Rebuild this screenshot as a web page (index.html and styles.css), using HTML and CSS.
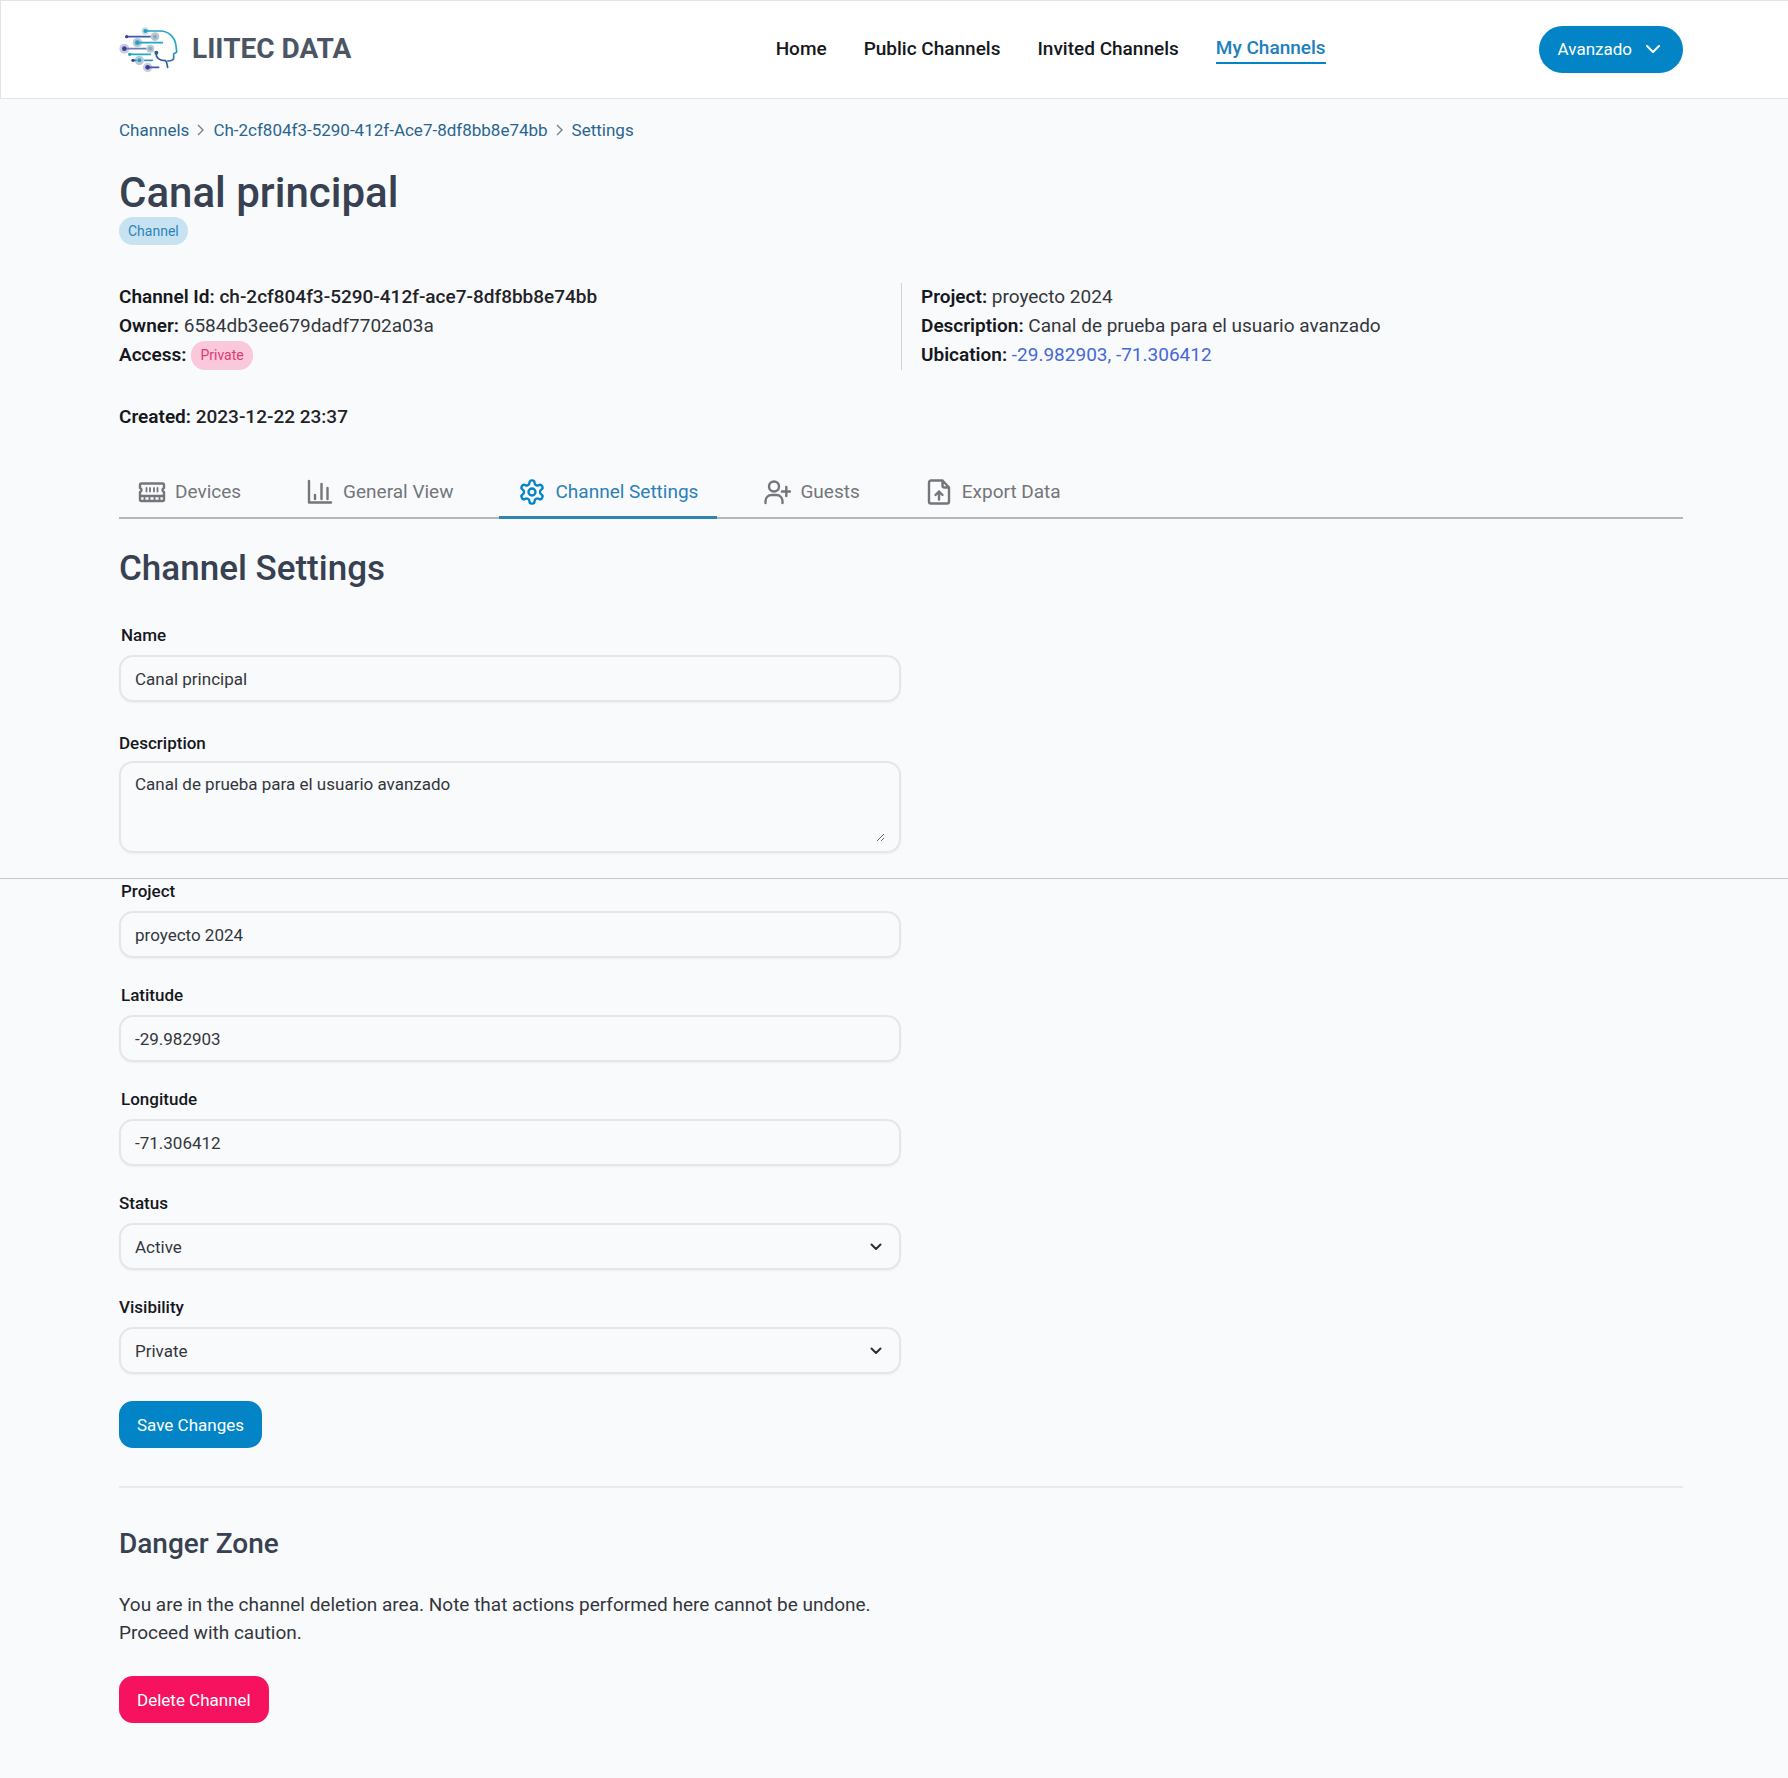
FILE: index.html
```html
<!DOCTYPE html>
<html lang="en">
<head>
<meta charset="utf-8">
<meta name="viewport" content="width=device-width, initial-scale=1">
<title>LIITEC DATA - Channel Settings</title>
<link rel="stylesheet" href="styles.css">
</head>
<body>
<header class="topbar">
  <a class="brand" href="#">
    <svg class="brand-mark" viewBox="57 78 180 141" fill="none" stroke-linecap="round" aria-hidden="true">
      <defs>
        <linearGradient id="head" gradientUnits="userSpaceOnUse" x1="165" y1="90" x2="200" y2="205">
          <stop offset="0" stop-color="#2a9fc4"/><stop offset=".55" stop-color="#1fb0c8"/><stop offset="1" stop-color="#3f4a9c"/>
        </linearGradient>
      </defs>
      <g fill="#b9c9d6">
        <circle cx="136" cy="93" r="11" fill="#bfe0e4"/><circle cx="165" cy="110" r="13"/><circle cx="112" cy="128" r="14"/>
        <circle cx="73" cy="146" r="15" fill="#c9cce0"/><circle cx="151" cy="146" r="12"/><circle cx="118" cy="181" r="14"/>
        <circle cx="143" cy="202" r="14" fill="#c9cce0"/>
      </g>
      <g stroke-width="5">
        <path d="M136 93h44c28 0 45 20 48 44l2 19c0 3-9 3-9 6v12c0 7-7 9-18 9" stroke="url(#head)"/>
        <path d="M168 158c0 16 12 24 29 24 5 6 4 13 6 20" stroke="#315e9f"/>
        <path d="M80 110h70" stroke="#4356a4"/><path d="M112 128h75" stroke="#1fa6c2"/>
        <path d="M73 146h64" stroke="#6d7db5"/><path d="M89 163h62" stroke="#24a6c4"/>
        <path d="M99 181h9M134 181h23" stroke="#3f8fb4"/><path d="M143 202h33" stroke="#3f57a4"/>
      </g>
      <g fill="#2a9fbd">
        <circle cx="136" cy="93" r="6"/><circle cx="112" cy="128" r="7"/><circle cx="89" cy="163" r="5"/>
        <circle cx="118" cy="181" r="6"/><circle cx="169" cy="158" r="6" fill="#285f91"/>
        <circle cx="165" cy="110" r="6" fill="#8ba9b8"/><circle cx="151" cy="146" r="6" fill="#8ba9b8"/>
        <circle cx="73" cy="146" r="7" fill="#3b3f92"/><circle cx="143" cy="202" r="7" fill="#3b3f92"/>
        <circle cx="80" cy="110" r="5" fill="#3b3f92"/><circle cx="99" cy="181" r="5" fill="#3b3f92"/>
      </g>
    </svg>
    <span class="brand-name">LIITEC DATA</span>
  </a>
  <nav class="nav" aria-label="Main">
    <a href="#">Home</a>
    <a href="#">Public Channels</a>
    <a href="#">Invited Channels</a>
    <a class="is-active" href="#" aria-current="page">My Channels</a>
  </nav>
  <button class="user-menu" type="button">Avanzado
    <svg width="16" height="16" viewBox="0 0 16 16" fill="none" stroke="currentColor" stroke-width="2" stroke-linecap="round" stroke-linejoin="round" aria-hidden="true"><path d="M2 5l6 6 6-6"/></svg>
  </button>
</header>

<main class="page">
  <nav class="crumbs" aria-label="Breadcrumb">
    <a href="#">Channels</a>
    <svg width="8" height="12" viewBox="0 0 8 12" aria-hidden="true"><path d="M1 1l5 5-5 5"/></svg>
    <a href="#">Ch-2cf804f3-5290-412f-Ace7-8df8bb8e74bb</a>
    <svg width="8" height="12" viewBox="0 0 8 12" aria-hidden="true"><path d="M1 1l5 5-5 5"/></svg>
    <a href="#">Settings</a>
  </nav>

  <h1 class="title">Canal principal</h1>
  <span class="badge badge-info">Channel</span>

  <section class="info">
    <div class="info-col">
      <p class="strong"><b>Channel Id:</b> ch-2cf804f3-5290-412f-ace7-8df8bb8e74bb</p>
      <p><b>Owner:</b> 6584db3ee679dadf7702a03a</p>
      <p class="access"><b>Access:</b> <span class="badge badge-danger">Private</span></p>
    </div>
    <div class="info-col info-side">
      <p><b>Project:</b> proyecto 2024</p>
      <p><b>Description:</b> Canal de prueba para el usuario avanzado</p>
      <p><b>Ubication:</b> <a class="map-link" href="#">-29.982903, -71.306412</a></p>
    </div>
  </section>
  <p class="created strong"><b>Created:</b> 2023-12-22 23:37</p>

  <nav class="tabs" aria-label="Channel sections">
    <a class="tab" href="#">
      <svg class="tab-icon" viewBox="0 0 28 28" aria-hidden="true"><path d="M3.5 5.5h21A1.5 1.5 0 0 1 26 7v3c-2 .5-2 3.5 0 4v7.5a1.5 1.5 0 0 1-1.5 1.5h-21A1.5 1.5 0 0 1 2 21.5V14c2-.5 2-3.5 0-4V7a1.5 1.5 0 0 1 1.5-1.5zM2 18h24"/><path class="thin" d="M8.5 10v3.5M12 10v3.5M16 10v3.5M19.5 10v3.5M6.5 19v4M11.500 19v4M16.500 19v4M21.500 19v4"/></svg>
      Devices</a>
    <a class="tab" href="#">
      <svg class="tab-icon" viewBox="0 0 28 28" aria-hidden="true"><path d="M3 3v21.500h22M9 17v4M15.500 6v15M21.500 10v11"/></svg>
      General View</a>
    <a class="tab is-active" href="#" aria-current="page">
      <svg class="tab-icon" viewBox="0 0 24 24" aria-hidden="true"><path d="M12.22 2h-.44a2 2 0 0 0-2 2v.18a2 2 0 0 1-1 1.73l-.43.25a2 2 0 0 1-2 0l-.15-.08a2 2 0 0 0-2.73.73l-.22.38a2 2 0 0 0 .73 2.73l.15.1a2 2 0 0 1 1 1.72v.51a2 2 0 0 1-1 1.74l-.15.09a2 2 0 0 0-.73 2.73l.22.38a2 2 0 0 0 2.73.73l.15-.08a2 2 0 0 1 2 0l.43.25a2 2 0 0 1 1 1.73V20a2 2 0 0 0 2 2h.44a2 2 0 0 0 2-2v-.18a2 2 0 0 1 1-1.73l.43-.25a2 2 0 0 1 2 0l.15.08a2 2 0 0 0 2.73-.73l.22-.39a2 2 0 0 0-.73-2.73l-.15-.08a2 2 0 0 1-1-1.74v-.5a2 2 0 0 1 1-1.74l.15-.09a2 2 0 0 0 .73-2.73l-.22-.38a2 2 0 0 0-2.73-.73l-.15.08a2 2 0 0 1-2 0l-.43-.25a2 2 0 0 1-1-1.73V4a2 2 0 0 0-2-2z"/><circle cx="12" cy="12" r="3"/></svg>
      Channel Settings</a>
    <a class="tab" href="#">
      <svg class="tab-icon" viewBox="0 0 28 28" aria-hidden="true"><circle cx="11" cy="8.500" r="5"/><path d="M2.500 25v-2a6 6 0 0 1 6-6h5a6 6 0 0 1 6 6v2M23.300 9v9M19 13.500h8"/></svg>
      Guests</a>
    <a class="tab" href="#">
      <svg class="tab-icon" viewBox="0 0 28 28" aria-hidden="true"><path d="M17.500 2.500H6a2 2 0 0 0-2 2v19a2 2 0 0 0 2 2h16a2 2 0 0 0 2-2v-14zM17.500 2.500V7.500a2 2 0 0 0 2 2H24M14 21.500v-8M10.500 17l3.500-3.500L17.500 17"/></svg>
      Export Data</a>
  </nav>

  <h2 class="section-title">Channel Settings</h2>

  <form class="settings">
    <div class="field">
      <label class="inset" for="name">Name</label>
      <input class="control" id="name" type="text" value="Canal principal">
    </div>
    <div class="field field-area">
      <label for="description">Description</label>
      <div class="area"><textarea id="description">Canal de prueba para el usuario avanzado</textarea></div>
    </div>
    <hr class="fold">
    <div class="field field-flush">
      <label class="inset" for="project">Project</label>
      <input class="control" id="project" type="text" value="proyecto 2024">
    </div>
    <div class="field">
      <label class="inset" for="latitude">Latitude</label>
      <input class="control" id="latitude" type="text" value="-29.982903">
    </div>
    <div class="field">
      <label class="inset" for="longitude">Longitude</label>
      <input class="control" id="longitude" type="text" value="-71.306412">
    </div>
    <div class="field">
      <label for="status">Status</label>
      <div class="select">
        <select class="control" id="status"><option>Active</option><option>Inactive</option></select>
        <svg class="select-arrow" width="12" height="8" viewBox="0 0 12 8" aria-hidden="true"><path d="M1.500 1.500L6 6l4.500-4.500"/></svg>
      </div>
    </div>
    <div class="field">
      <label for="visibility">Visibility</label>
      <div class="select">
        <select class="control" id="visibility"><option>Private</option><option>Public</option></select>
        <svg class="select-arrow" width="12" height="8" viewBox="0 0 12 8" aria-hidden="true"><path d="M1.500 1.500L6 6l4.500-4.500"/></svg>
      </div>
    </div>
    <button class="btn btn-primary" type="submit">Save Changes</button>
  </form>

  <section class="danger">
    <h3 class="danger-title">Danger Zone</h3>
    <p>You are in the channel deletion area. Note that actions performed here cannot be undone.<br>Proceed with caution.</p>
    <button class="btn btn-danger" type="button">Delete Channel</button>
  </section>
</main>
</body>
</html>
```

FILE: styles.css
```css
:root {
  --blue: #0284c7;
  --pink: #f6125f;
  --ink: #1f2328;
  --heading: #374151;
  --line: #e4e6e8;
  --gutter-start: 119px;
  --gutter-end: 105px;
}

*, *::before, *::after { box-sizing: border-box; }

body {
  margin: 0;
  background: #f9fafc;
  color: #33373c;
  font: 400 19px/28px Roboto, "Liberation Sans", sans-serif;
}

h1, h2, h3, p { margin: 0; }
h1, h2, h3 { color: var(--heading); font-weight: 500; }
a { color: inherit; text-decoration: none; }
button, input, textarea, select { font: inherit; color: inherit; }
b { font-weight: 600; color: #15181c; }
.strong { font-weight: 500; color: var(--ink); }

/* Top bar */
.topbar {
  display: flex;
  align-items: center;
  min-height: 99px;
  padding: 0 var(--gutter-end) 1px calc(var(--gutter-start) - 1px);
  background: #fff;
  border: 1px solid #e2e4e7;
  border-right: 0;
}
.brand { display: flex; align-items: center; gap: 13px; }
.brand-mark { width: 60px; height: 47px; }
.brand-name { color: #4b5563; font-size: 28px; font-weight: 700; }
.nav {
  display: flex;
  align-items: center;
  gap: 37px;
  margin-left: auto;
  margin-right: 213px;
  color: #15181c;
  font-weight: 500;
}
.nav .is-active { color: #2080bd; border-bottom: 2px solid var(--blue); }
.user-menu {
  display: flex;
  align-items: center;
  gap: 13px;
  height: 47px;
  padding: 0 22px 0 19px;
  border: 0;
  border-radius: 24px;
  background: var(--blue);
  color: #fff;
  font-size: 17px;
}

/* Page */
.page { padding: 17px var(--gutter-end) 56px var(--gutter-start); }
.crumbs { display: flex; align-items: center; gap: 8px; color: #2a6590; font-size: 17px; }
.crumbs svg { fill: none; stroke: #7b8087; stroke-width: 1.4; }
.title { margin-top: 25px; font-size: 42px; line-height: 48px; }
.badge {
  display: block;
  width: max-content;
  padding: 0 9px;
  border-radius: 14px;
  font-size: 14px;
}
.badge-info { background: #c7e3f1; color: #2b83bb; }
.badge-danger { background: #f9c8da; color: #e23a72; }

.info { display: grid; grid-template-columns: 1fr 1fr; margin-top: 38px; }
.info-col { display: grid; grid-auto-rows: 29px; }
.info-side { padding-left: 19px; border-left: 1px solid #cfd2d5; }
.access { display: flex; gap: 5px; }
.map-link { color: #4568d8; }
.created { margin-top: 33px; }

/* Tabs */
.tabs {
  display: flex;
  gap: 27px;
  margin-top: 36px;
  border-bottom: 2px solid #b4b7ba;
}
.tab {
  display: flex;
  align-items: center;
  gap: 9px;
  height: 50px;
  padding: 0 19px;
  color: #73767b;
}
.tab.is-active {
  margin-bottom: -2px;
  height: 52px;
  border-bottom: 3px solid #3184ae;
  color: #2a80b9;
}
.tab-icon {
  width: 28px;
  height: 28px;
  fill: none;
  stroke: currentColor;
  stroke-width: 2.4;
  stroke-linecap: round;
  stroke-linejoin: round;
}
.tab-icon .thin { stroke-width: 1.8; }
.tab.is-active .tab-icon { color: var(--blue); stroke-width: 2; }

/* Settings form */
.section-title { margin-top: 28px; font-size: 35px; line-height: 44px; }
.settings { width: 50%; margin-top: 32px; }
.field { display: grid; gap: 8px; margin-top: 25px; }
.field-area { gap: 6px; margin-top: 29px; }
.field-flush, .field:first-child { margin-top: 0; }
.field label { color: #15181c; font-size: 17px; font-weight: 500; line-height: 24px; }
.field .inset { padding-left: 2px; }
.control, .area {
  width: 100%;
  border: 2px solid var(--line);
  border-radius: 14px;
  background: transparent;
  box-shadow: 0 1px 2px #0000000d;
  font-size: 17px;
}
.control { height: 47px; padding: 0 14px; }
.area { display: flex; height: 92px; padding: 9px 14px; }
.area textarea {
  flex: 1;
  padding: 0;
  border: 0;
  background: transparent;
  line-height: 24px;
  resize: vertical;
}
.select { display: grid; align-items: center; }
.select > * { grid-area: 1 / 1; }
.select .control { appearance: none; }
.select-arrow {
  justify-self: end;
  margin-right: 19px;
  fill: none;
  stroke: #2b2f33;
  stroke-width: 2;
  stroke-linecap: round;
  stroke-linejoin: round;
  pointer-events: none;
}
/* Rule across the whole window, past the page gutters */
.fold {
  width: 100vw;
  height: 1px;
  margin: 25px 0 0 calc(-1 * var(--gutter-start));
  border: 0;
  background: #c6c9cc;
}

.btn {
  height: 47px;
  padding: 0 18px;
  border: 0;
  border-radius: 14px;
  color: #fff;
  font-size: 17px;
}
.btn-primary { margin-top: 27px; background: var(--blue); }
.btn-danger { background: var(--pink); }

/* Danger zone */
.danger {
  display: grid;
  justify-items: start;
  gap: 29px;
  margin-top: 38px;
  padding-top: 38px;
  border-top: 2px solid #e8eaec;
}
.danger-title { font-size: 28px; line-height: 36px; }
```
